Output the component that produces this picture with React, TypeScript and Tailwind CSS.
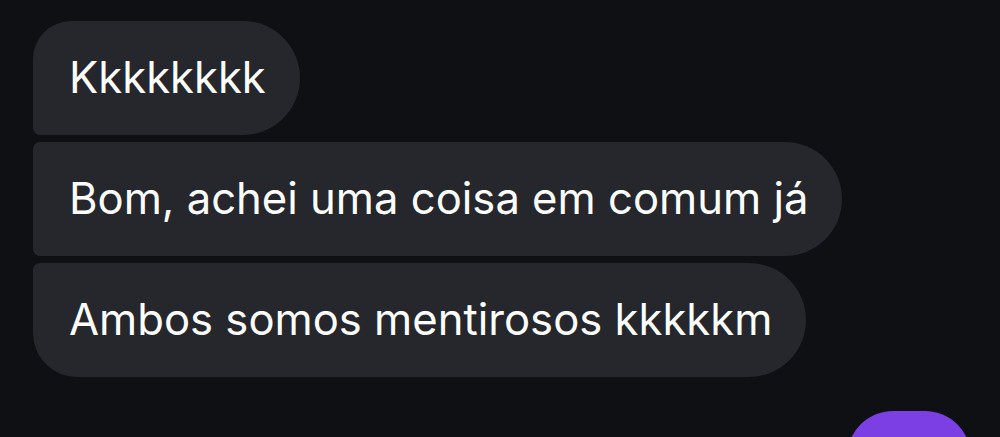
import React from "react";

const messages = [
  {text: "Kkkkkkkk", corners: "rounded-tl-[38px] rounded-tr-[57px] rounded-br-[57px] rounded-bl-[7px]"},
  {text: "Bom, achei uma coisa em comum já", corners: "rounded-tl-[7px] rounded-tr-[57px] rounded-br-[57px] rounded-bl-[7px]"},
  {text: "Ambos somos mentirosos kkkkkm", corners: "rounded-tl-[7px] rounded-tr-[57px] rounded-br-[57px] rounded-bl-[44px]"},
];

export default function App() {
  return (
    <div className="w-[1000px] h-[437px] overflow-hidden bg-[#0e1014] font-['Inter',sans-serif]">
      <div className="flex flex-col items-start gap-[7px] pl-[33px] pt-[21px]">
        {messages.map(m => (
          <div
            key={m.text}
            className={`h-[114px] flex items-center pl-[36px] pr-[34px] bg-[#25272c] text-white text-[43.6px] leading-none whitespace-nowrap ${m.corners}`}
          >
            {m.text}
          </div>
        ))}
      </div>
      {/* outgoing bubble, cut off at the bottom */}
      <div className="flex justify-end pr-[29px] mt-[34px]">
        <div className="w-[124px] h-[80px] rounded-t-[46px] bg-[#7c3fe4]" />
      </div>
    </div>
  );
}
